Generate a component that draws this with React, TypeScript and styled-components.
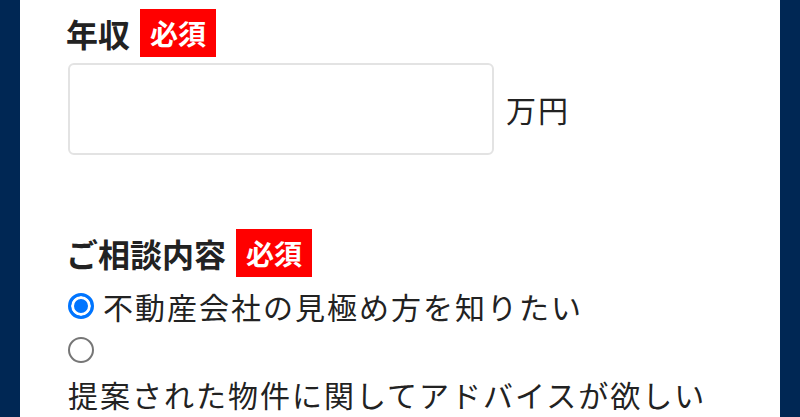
import styled, { createGlobalStyle } from "styled-components";

const GlobalStyle = createGlobalStyle`
    html, body {
        margin: 0;
        padding: 0;
        background: #002754;
        font-family: "Noto Sans CJK JP", "Noto Sans", sans-serif;
        color: #222;
    }
`;

const Page = styled.div`
    height: 417px;
    overflow: hidden;
    margin: 0 20px;
    background: #fff;
    padding: 9px 48px 0 48px;
    box-sizing: border-box;
`;

const Section = styled.section<{ $gap?: number }>`
    margin-bottom: ${(p) => p.$gap ?? 0}px;
`;

const HeadingRow = styled.div`
    display: flex;
    align-items: center;
    gap: 10px;
    margin-left: -2px;
`;

const Heading = styled.h3`
    margin: 0;
    font-size: 32px;
    font-weight: 700;
    line-height: 48px;
    color: #222;
`;

const Required = styled.span`
    display: inline-block;
    background: #ff0000;
    color: #fff;
    font-size: 28px;
    font-weight: 700;
    line-height: 48px;
    padding: 0 10px;
`;

const InputRow = styled.div`
    display: flex;
    align-items: center;
    gap: 12px;
    margin-top: 6px;
`;

const TextInput = styled.input`
    width: 426px;
    height: 92px;
    box-sizing: border-box;
    border: 2px solid #e3e3e3;
    border-radius: 6px;
    font-size: 28px;
    padding: 0 12px;
    outline: none;
`;

const Unit = styled.span`
    font-size: 30px;
    letter-spacing: 2px;
    color: #222;
`;

const Options = styled.div`
    margin-top: 7px;
`;

const Option = styled.label`
    display: flex;
    flex-wrap: wrap;
    align-items: center;
    font-size: 30px;
    letter-spacing: 2px;
    line-height: 44px;
    color: #222;
`;

const Control = styled.span`
    display: flex;
    align-items: center;
    height: 44px;
    margin-right: 9px;
`;

const Radio = styled.input`
    appearance: none;
    width: 26px;
    height: 26px;
    margin: 0;
    box-sizing: border-box;
    border-radius: 50%;
    border: 2px solid #767676;
    background: #fff;

    &:checked {
        border: 3px solid #0075ff;
        background: #0075ff;
        box-shadow: inset 0 0 0 3px #fff;
    }
`;

const options = [
    { label: "不動産会社の見極め方を知りたい", checked: true },
    { label: "提案された物件に関してアドバイスが欲しい", checked: false },
];

function App() {
    return (
        <>
            <GlobalStyle />
            <Page>
                <Section $gap={74}>
                    <HeadingRow>
                        <Heading>年収</Heading>
                        <Required>必須</Required>
                    </HeadingRow>
                    <InputRow>
                        <TextInput type="text" />
                        <Unit>万円</Unit>
                    </InputRow>
                </Section>
                <Section>
                    <HeadingRow>
                        <Heading>ご相談内容</Heading>
                        <Required>必須</Required>
                    </HeadingRow>
                    <Options>
                        {options.map((o) => (
                            <Option key={o.label}>
                                <Control>
                                    <Radio type="radio" name="consult" defaultChecked={o.checked} />
                                </Control>
                                <span>{o.label}</span>
                            </Option>
                        ))}
                    </Options>
                </Section>
            </Page>
        </>
    );
}

export default App;
